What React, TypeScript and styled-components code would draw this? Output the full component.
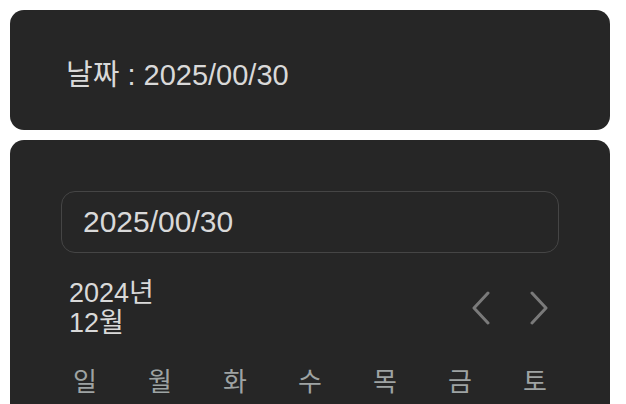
import React, {useState} from 'react'
import styled, {createGlobalStyle} from 'styled-components'

const GlobalStyle = createGlobalStyle`
  html, body {
    margin: 0;
    padding: 0;
    background: #fff;
    overflow: hidden;
  }
  body {
    font-family: 'Liberation Sans', 'Noto Sans CJK KR', sans-serif;
  }
`

const WEEKDAYS = ['일', '월', '화', '수', '목', '금', '토']

export default function App() {
  const [value, setValue] = useState('2025/00/30')
  const [year] = useState(2024)
  const [month] = useState(12)

  return (
    <Page>
      <GlobalStyle />
      <ResultCard>
        <ResultText>날짜 : {value}</ResultText>
      </ResultCard>
      <CalendarCard>
        <DateInput value={value} onChange={e => setValue(e.target.value)} />
        <Header>
          <MonthTitle>
            <span>{year}년</span>
            <span>{month}월</span>
          </MonthTitle>
          <NavGroup>
            <NavButton aria-label='이전 달'>
              <svg width='20' height='34' viewBox='0 0 20 34'>
                <polyline points='17,2 3,17 17,32' fill='none' stroke='#7a7a7a' strokeWidth='3' strokeLinecap='round' strokeLinejoin='round' />
              </svg>
            </NavButton>
            <NavButton aria-label='다음 달'>
              <svg width='20' height='34' viewBox='0 0 20 34'>
                <polyline points='3,2 17,17 3,32' fill='none' stroke='#7a7a7a' strokeWidth='3' strokeLinecap='round' strokeLinejoin='round' />
              </svg>
            </NavButton>
          </NavGroup>
        </Header>
        <WeekRow>
          {WEEKDAYS.map(d => (
            <WeekCell key={d}>{d}</WeekCell>
          ))}
        </WeekRow>
      </CalendarCard>
    </Page>
  )
}

const Page = styled.div`
  width: 600px;
  padding: 10px;
  display: flex;
  flex-direction: column;
  gap: 10px;
`

const ResultCard = styled.div`
  height: 120px;
  box-sizing: border-box;
  padding: 0 56px;
  padding-top: 4px;
  background: #262626;
  border-radius: 14px;
  display: flex;
  align-items: center;
`

const ResultText = styled.p`
  margin: 0;
  font-size: 29px;
  color: #d9d9d9;
`

const CalendarCard = styled.div`
  background: #262626;
  border-radius: 14px;
  padding: 51px;
  display: flex;
  flex-direction: column;
`

const DateInput = styled.input`
  height: 62px;
  box-sizing: border-box;
  padding: 0 21px;
  border: 1px solid #454545;
  border-radius: 14px;
  background: transparent;
  color: #d9d9d9;
  font-family: inherit;
  font-size: 30px;
  &:focus {
    outline: none;
  }
`

const Header = styled.div`
  margin-top: 25px;
  display: flex;
  align-items: center;
  justify-content: space-between;
`

const MonthTitle = styled.div`
  padding-left: 8px;
  display: flex;
  flex-direction: column;
  font-size: 27px;
  line-height: 30px;
  color: #d9d9d9;
`

const NavGroup = styled.div`
  display: flex;
  gap: 18px;
`

const NavButton = styled.button`
  width: 40px;
  height: 40px;
  padding: 0;
  border: none;
  background: none;
  display: flex;
  align-items: center;
  justify-content: center;
  cursor: pointer;
`

const WeekRow = styled.div`
  margin-top: 25px;
  display: flex;
  justify-content: space-between;
`

const WeekCell = styled.span`
  width: 48px;
  text-align: center;
  font-size: 26px;
  line-height: 39px;
  color: #9ea3a3;
`
